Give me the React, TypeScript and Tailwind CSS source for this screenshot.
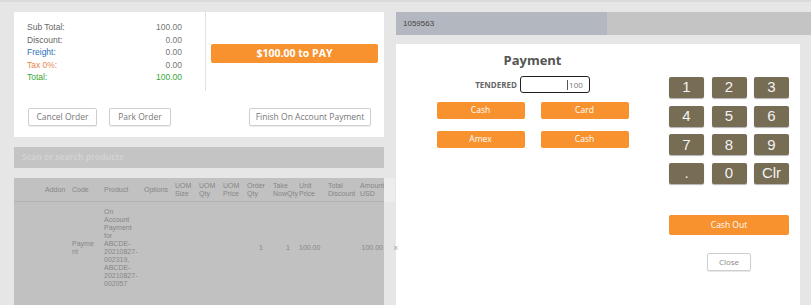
import React from "react";

const totals = [
  { label: "Sub Total:", value: "100.00", lc: "text-[#666]", vc: "text-[#777]" },
  { label: "Discount:", value: "0.00", lc: "text-[#666]", vc: "text-[#777]" },
  { label: "Freight:", value: "0.00", lc: "text-[#2f6fc0]", vc: "text-[#777]" },
  { label: "Tax 0%:", value: "0.00", lc: "text-[#e8864a]", vc: "text-[#777]" },
  { label: "Total:", value: "100.00", lc: "text-[#3aa83a]", vc: "text-[#3aa83a]" },
];

const headers: { l1: string; l2?: string; w: string }[] = [
  { l1: "Addon", w: "w-[27px]" },
  { l1: "Code", w: "w-[32px]" },
  { l1: "Product", w: "w-[40px]" },
  { l1: "Options", w: "w-[31px]" },
  { l1: "UOM", l2: "Size", w: "w-[24px]" },
  { l1: "UOM", l2: "Qty", w: "w-[24px]" },
  { l1: "UOM", l2: "Price", w: "w-[24px]" },
  { l1: "Order", l2: "Qty", w: "w-[26px]" },
  { l1: "Take", l2: "NowQty", w: "w-[26px]" },
  { l1: "Unit", l2: "Price", w: "w-[29px]" },
  { l1: "Total", l2: "Discount", w: "w-[32px]" },
  { l1: "Amount", l2: "USD", w: "w-[24px]" },
];

const keys = ["1", "2", "3", "4", "5", "6", "7", "8", "9", ".", "0", "Clr"];

export default function App() {
  return (
    <div className="w-[811px] h-[305px] overflow-hidden bg-[#e6e6e6] border-t-2 border-[#dadada] flex font-['Liberation_Sans',Arial,sans-serif]">
      {/* left side */}
      <div className="w-[396px] shrink-0 pl-[14px] pt-[10px]">
        <div className="w-[370px] h-[125px] bg-white flex flex-col">
          <div className="flex h-[79px]">
            <div className="w-[192px] border-r border-[#e2e2e2] pl-[13px] pr-[23px] pt-[9px] text-[8.5px] leading-[12.5px]">
              {totals.map((t) => (
                <div key={t.label} className="flex justify-between">
                  <span className={t.lc}>{t.label}</span>
                  <span className={t.vc}>{t.value}</span>
                </div>
              ))}
            </div>
            <div className="flex-1 pl-[5px] pr-[6px] pt-[32px]">
              <div className="h-[19px] rounded-[2px] bg-[#f7922f] text-white font-bold text-[10.5px] flex items-center justify-center font-['Open_Sans',sans-serif]">
                $100.00 to PAY
              </div>
            </div>
          </div>
          <div className="flex items-center pl-[14px] pr-[13px] pt-[17px] text-[8.5px] text-[#777] font-['Open_Sans',sans-serif]">
            <div className="w-[69px] h-[18px] border border-[#cfcfcf] rounded-[2px] shadow-[0_1px_1px_rgba(0,0,0,0.08)] flex items-center justify-center">
              Cancel Order
            </div>
            <div className="ml-[12px] w-[62px] h-[18px] border border-[#cfcfcf] rounded-[2px] shadow-[0_1px_1px_rgba(0,0,0,0.08)] flex items-center justify-center">
              Park Order
            </div>
            <div className="ml-auto w-[122px] h-[18px] border border-[#cfcfcf] rounded-[2px] shadow-[0_1px_1px_rgba(0,0,0,0.08)] flex items-center justify-center">
              Finish On Account Payment
            </div>
          </div>
        </div>

        <div className="mt-[10px] w-[370px] h-[21px] bg-[#c4c4c4] flex items-center pl-[8px] text-[8.5px] font-bold text-[#d2d2d2] font-['Open_Sans',sans-serif]">
          Scan or search products
        </div>

        <div className="mt-[10px] relative w-[370px] h-[140px] bg-[#c1c1c1] text-[7px] leading-[8px] text-[#878787]">
          <div className="absolute left-[370px] top-0 w-[11px] h-[24px] bg-[#ededed]" />
          <div className="flex h-[24px] items-center border-b border-[#b4b4b4] pl-[31px]">
            {headers.map((h, i) => (
              <div key={i} className={`${h.w} shrink-0 whitespace-nowrap`}>
                <div>{h.l1}</div>
                {h.l2 && <div>{h.l2}</div>}
              </div>
            ))}
          </div>
          <div className="flex pt-[6px] pl-[31px]">
            <div className="w-[27px] shrink-0" />
            <div className="w-[32px] shrink-0 flex flex-col justify-center">
              <div>Payme</div>
              <div>nt</div>
            </div>
            <div className="w-[40px] shrink-0">
              {["On", "Account", "Payment", "for", "ABCDE-", "20210827-", "002319,", "ABCDE-", "20210827-", "002057"].map((l, i) => (
                <div key={i}>{l}</div>
              ))}
            </div>
            <div className="w-[103px] shrink-0" />
            <div className="w-[26px] shrink-0 flex items-center justify-end pr-[10px]">1</div>
            <div className="w-[26px] shrink-0 flex items-center justify-end pr-[9px]">1</div>
            <div className="w-[29px] shrink-0 flex items-center">100.00</div>
            <div className="w-[32px] shrink-0" />
            <div className="w-[24px] shrink-0 flex items-center justify-end pr-[1px] whitespace-nowrap">100.00</div>
          </div>
          <div className="absolute left-[379px] top-[66px] text-[9px] text-[#aaa]">×</div>
        </div>
      </div>

      {/* right side: payment modal */}
      <div className="flex-1 pt-[10px] pr-[11px]">
        <div className="-mr-[11px] h-[23px] flex">
          <div className="w-[211px] bg-[#b3b7bf] flex items-center pl-[7px] text-[8px] text-[#444]">1059563</div>
          <div className="flex-1 bg-[#c4c4c4]" />
        </div>
        <div className="mt-[9px] h-[270px] bg-white flex font-['Open_Sans',sans-serif]">
          <div className="w-[273px] flex flex-col items-center pt-[7px]">
            <div className="text-[13px] font-bold text-[#555] leading-[18px]">Payment</div>
            <div className="mt-[7px] flex items-center">
              <span className="text-[8px] font-bold text-[#666] mr-[3px]">TENDERED</span>
              <div className="w-[70px] h-[17px] border-[1.5px] border-[#222] rounded-[3px] flex items-center justify-end pr-[6px] text-[8px] text-[#777]">
                <span className="w-[1px] h-[10px] bg-[#555] mr-[1px]" />100
              </div>
            </div>
            <div className="mt-[9px] grid grid-cols-[88px_88px] gap-x-[16px] gap-y-[12px] text-[8.5px] text-white">
              {["Cash", "Card", "Amex", "Cash"].map((b, i) => (
                <div key={i} className="h-[17px] bg-[#f7922f] rounded-[2px] flex items-center justify-center">
                  {b}
                </div>
              ))}
            </div>
          </div>
          <div className="w-[120px] pt-[33px]">
            <div className="grid grid-cols-[35px_35px_35px] gap-x-[7.5px] gap-y-[7.7px] font-['Liberation_Sans',Arial,sans-serif]">
              {keys.map((k) => (
                <div
                  key={k}
                  className="h-[21px] rounded-[2px] bg-[#776c54] shadow-[0_1px_1px_rgba(0,0,0,0.3)] flex items-center justify-center text-[15px] text-[#f2f2f2]"
                >
                  {k}
                </div>
              ))}
            </div>
            <div className="mt-[31px] h-[20px] bg-[#f7922f] rounded-[2px] flex items-center justify-center text-[8.5px] text-white">
              Cash Out
            </div>
            <div className="mt-[18px] flex justify-center">
              <div className="w-[44px] h-[18px] border border-[#cfcfcf] rounded-[2px] shadow-[0_1px_1px_rgba(0,0,0,0.1)] flex items-center justify-center text-[8px] text-[#888]">
                Close
              </div>
            </div>
          </div>
        </div>
      </div>
    </div>
  );
}
